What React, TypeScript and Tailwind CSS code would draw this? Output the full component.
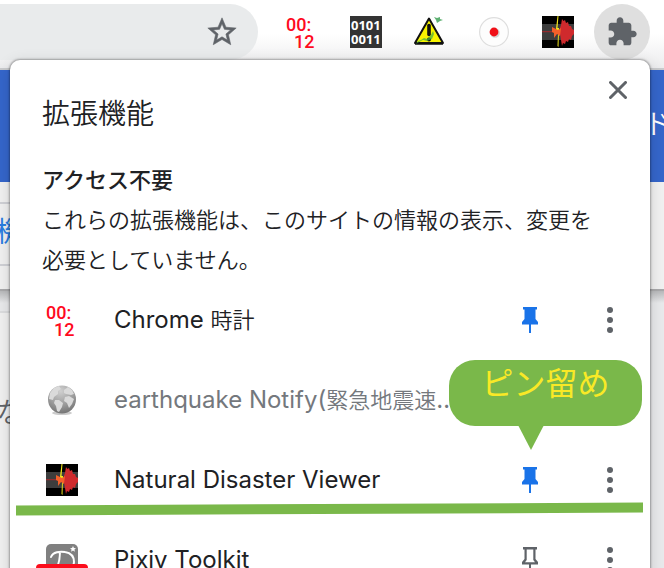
import React from "react";

function ClockIcon() {
  return (
    <svg viewBox="0 0 32 32" className="size-8 shrink-0 overflow-visible" aria-hidden="true">
      <g fill="#ff0a1e" fontFamily="Roboto, sans-serif" fontSize="18" fontWeight="500">
        <text x="0" y="15">00:</text>
        <text x="8" y="32">12</text>
      </g>
    </svg>
  );
}

function BinaryIcon() {
  return (
    <svg viewBox="0 0 32 32" className="size-8 shrink-0" aria-hidden="true">
      <rect width="32" height="32" fill="#333" />
      <g fill="#fff" fontFamily="'Open Sans', sans-serif" fontSize="13" fontWeight="700">
        <text x="1" y="14">0101</text>
        <text x="1" y="28">0011</text>
      </g>
    </svg>
  );
}

function WarningIcon() {
  return (
    <svg viewBox="2 0 32 32" className="size-8 shrink-0" aria-hidden="true">
      <path d="M17 2.500 31 27H3Z" fill="#f8f400" stroke="#111" strokeWidth="2" strokeLinejoin="round" />
      <path d="M3 28h28" stroke="#111" strokeWidth="1.5" />
      <path d="M17 9.500v9" stroke="#111" strokeWidth="3.6" strokeLinecap="round" />
      <circle cx="17" cy="23.4" r="2" fill="#111" />
      <path d="M4 28l2-3 3-1 3-2 3 1 4-4 2-4 1 3-2 5-5 2-4-1-4 2Z" fill="#4fb33c" opacity=".75" />
      <path d="m22 1 3 1 3-1 0 2 3 1-3 1-3 2-1-3Z" fill="#43a35a" opacity=".85" />
    </svg>
  );
}

function RecordIcon() {
  return (
    <svg viewBox="2 0 32 32" className="size-8 shrink-0" aria-hidden="true">
      <circle cx="18" cy="16" r="14.4" fill="#fdfdfd" stroke="#dedede" strokeWidth="1.2" />
      <circle cx="19" cy="17" r="4.8" fill="#bbb" opacity=".6" />
      <circle cx="18" cy="16" r="4.4" fill="#f01018" />
    </svg>
  );
}

function DisasterIcon() {
  return (
    <svg viewBox="0 0 32 32" className="size-8 shrink-0" aria-hidden="true">
      <rect width="32" height="32" fill="#000" />
      <rect y="8" width="32" height="16" fill="#3d3d3d" />
      <path d="M0 15.700h12" stroke="#a8292c" strokeWidth="1" />
      <path
        d="m20 3 1.500 2L23 4l1 3 2-1 1 4 2 0 1 3 2 1v4l-2 2-1 4-2-1-1 3-2-1-1 3-2-1-1 3-1-6-1-6v-6l1-3Z"
        fill="#cf2a2d"
      />
      <path d="M15.500 0h1L15.500 12h1.500l-.5 19-1-1L16 18l-3-3 1-2Z" fill="#f4e91b" />
      <path d="m10 11 6 3 3-2-1 8-3-2-3 4 0-5-2-1Z" fill="#f4602a" />
    </svg>
  );
}

function GlobeIcon() {
  return (
    <svg viewBox="0 0 32 32" className="size-8 shrink-0" aria-hidden="true">
      <defs>
        <radialGradient id="globe" cx=".45" cy=".2" r=".8">
          <stop offset="0" stopColor="#d0d0d0" />
          <stop offset=".6" stopColor="#9d9d9d" />
          <stop offset="1" stopColor="#757575" />
        </radialGradient>
      </defs>
      <ellipse cx="16" cy="29" rx="10" ry="2" fill="#ccc" />
      <circle cx="16" cy="15.5" r="14" fill="url(#globe)" />
      <g fill="#dadada">
        <path d="M4 9 8 4l5-2 2 3-3 2 0 3-4 3-1 3-4-1Z" />
        <path d="m9 16 4 0 4 3-1 4-3 5-2-1-1-5-2-3Z" />
        <path d="m18 6 4-3 4 3 2 4-3 1-5-1-2-1Z" />
        <path d="m19 13 4-1 5 3-2 5-3 4-2-5-3-2Z" />
      </g>
    </svg>
  );
}

function PixivIcon() {
  return (
    <svg viewBox="0 0 52 32" className="-mx-[10px] h-8 w-[52px] shrink-0" aria-hidden="true">
      <rect x="10" width="32" height="32" rx="5" fill="#808080" />
      <path
        d="M15 13c2-5 9-6 14-5 6 1 9 5 9 10s-4 9-10 9M24 8c0 6-1 12-4 18"
        fill="none"
        stroke="#fff"
        strokeWidth="2"
        strokeLinecap="round"
      />
      <path d="m37 2 .9 2 2.100.2-1.600 1.400.5 2.100-1.900-1.100-1.900 1.100.5-2.100L34 4.200l2.100-.2Z" fill="#fff" />
      <rect y="20" width="52" height="20" rx="4" fill="#fc0d1b" />
    </svg>
  );
}

function StarIcon() {
  return (
    <svg viewBox="0 0 24 24" className="size-[34px]" fill="#5f6368" stroke="#5f6368" strokeWidth=".4" aria-hidden="true">
      <path d="m22 9.240-7.190-.62L12 2 9.190 8.630 2 9.240l5.460 4.730L5.820 21 12 17.270 18.180 21l-1.630-7.030L22 9.240zM12 15.400l-3.760 2.270 1-4.280-3.320-2.880 4.380-.38L12 6.100l1.710 4.040 4.380.38-3.320 2.880 1 4.280L12 15.400z" />
    </svg>
  );
}

function PuzzleIcon() {
  return (
    <svg viewBox="0 0 24 24" className="size-8" fill="#5f6368" aria-hidden="true">
      <path d="M20.500 11H19V7c0-1.100-.9-2-2-2h-4V3.500C13 2.120 11.880 1 10.500 1S8 2.120 8 3.500V5H4c-1.100 0-1.990.9-1.990 2v3.800H3.500c1.490 0 2.700 1.210 2.700 2.700s-1.210 2.700-2.700 2.700H2V20c0 1.100.9 2 2 2h3.800v-1.500c0-1.490 1.210-2.700 2.700-2.700 1.490 0 2.700 1.210 2.700 2.700V22H17c1.100 0 2-.9 2-2v-4h1.500c1.380 0 2.500-1.120 2.500-2.500S21.880 11 20.500 11z" />
    </svg>
  );
}

function PinIcon({ pinned }: { pinned: boolean }) {
  return pinned ? (
    <svg viewBox="0 0 16 26" className="h-[26px] w-4" fill="#1a73e8" aria-hidden="true">
      <path d="M1 0h14v2.500h-1.500V12l2.500 3v2.500H9V26H7v-8.500H0V15l2.500-3V2.500H1Z" />
    </svg>
  ) : (
    <svg viewBox="0 0 16 26" className="h-[26px] w-4" fill="#5f6368" aria-hidden="true">
      <path
        fillRule="evenodd"
        d="M1 0h14v2.500h-1.500V12l2.500 3v2.500H9V26H7v-8.500H0V15l2.500-3V2.500H1ZM4.700 2.500V13L3 15.300h10L11.300 13V2.500Z"
      />
    </svg>
  );
}

function DotsIcon() {
  return (
    <svg viewBox="0 0 6 26" className="h-[26px] w-[6px]" fill="#5f6368" aria-hidden="true">
      <circle cx="3" cy="3" r="3" />
      <circle cx="3" cy="13" r="3" />
      <circle cx="3" cy="23" r="3" />
    </svg>
  );
}

type Extension = {
  name: string;
  nameJa?: string;
  icon: React.ReactNode;
  pinned: boolean;
  disabled?: boolean;
  highlighted?: boolean;
};

const extensions: Extension[] = [
  { name: "Chrome ", nameJa: "時計", icon: <ClockIcon />, pinned: true },
  { name: "earthquake Notify(", nameJa: "緊急地震速報)", icon: <GlobeIcon />, pinned: false, disabled: true },
  { name: "Natural Disaster Viewer", icon: <DisasterIcon />, pinned: true, highlighted: true },
  { name: "Pixiv Toolkit", icon: <PixivIcon />, pinned: false },
];

function Callout() {
  return (
    <div className="absolute right-2 bottom-[94px] z-10">
      <div className="h-[66px] w-[193px] rounded-[26px] bg-[#7ab84a] text-center text-[32px] leading-[48px] text-[#f9e926]">
        ピン留め
      </div>
      <svg viewBox="0 0 26 25" className="absolute top-[65px] left-[69px] h-[25px] w-[26px]" aria-hidden="true">
        <path d="M0 0h26L13 25Z" fill="#7ab84a" />
      </svg>
    </div>
  );
}

function ExtensionRow({ name, nameJa, icon, pinned, disabled, highlighted }: Extension) {
  return (
    <li className="relative flex h-20 items-center pr-5 pl-9">
      {icon}
      <span className={`mr-12 ml-9 min-w-0 flex-1 truncate text-2xl leading-10 ${disabled ? "text-[#74787d]" : ""}`}>
        {name}
        {nameJa && <span className="text-[22px] font-[350]">{nameJa}</span>}
      </span>
      <button
        type="button"
        aria-label={`${name} pin`}
        aria-pressed={pinned}
        className={`flex size-10 items-center justify-center ${disabled ? "invisible" : ""}`}
      >
        <PinIcon pinned={pinned} />
      </button>
      <button
        type="button"
        aria-label={`${name} menu`}
        className={`ml-10 flex size-10 items-center justify-center ${disabled ? "invisible" : ""}`}
      >
        <DotsIcon />
      </button>
      {highlighted && (
        <>
          <Callout />
          <div className="absolute right-[7px] bottom-[6px] left-[6px] h-[10px] rotate-[-0.27deg] bg-[#7ab84a]" />
        </>
      )}
    </li>
  );
}

export default function App() {
  return (
    <div className="relative flex h-screen flex-col overflow-hidden bg-[#e9eaec] font-['Inter','Noto_Sans_CJK_JP',sans-serif] text-[#202124]">
      <header className="flex h-[70px] shrink-0 items-start border-b-2 border-[#c9cacd] bg-linear-to-b from-white from-50% to-[#ececee] pt-1 pr-[14px]">
        <div className="flex h-14 flex-1 items-center justify-end rounded-r-full bg-[#e9ebec] pr-[19px]">
          <button type="button" aria-label="Bookmark">
            <StarIcon />
          </button>
        </div>
        <div className="mr-5 ml-7 flex h-14 items-center gap-8">
          <ClockIcon />
          <BinaryIcon />
          <WarningIcon />
          <RecordIcon />
          <DisasterIcon />
        </div>
        <button
          type="button"
          aria-label="Extensions"
          className="flex size-14 items-center justify-center rounded-full bg-[#dfdfdf]"
        >
          <PuzzleIcon />
        </button>
      </header>

      <div className="flex h-28 shrink-0 items-center justify-end bg-[#3566cb] pb-1 text-[28px] font-[350] text-white">
        <span className="-mr-2">ド</span>
      </div>
      <div className="h-[109px] shrink-0 border-b-2 border-[#a9a9ab] bg-[#f1f1f1] pt-5">
        <div className="flex h-16 w-1/2 items-center border-y-2 border-[#d0d1d6] pb-1 text-[28px] leading-8 text-[#2a7de1]">
          <span className="-ml-1">機能</span>
        </div>
      </div>
      <div className="h-3 shrink-0 bg-linear-to-b from-[#b8b9bb] to-[#e9eaec]" />
      <div className="mt-2 w-1/2 flex-1 border-t-2 border-[#dcdddf] bg-[#f1f1f1] pt-21 text-[28px] leading-8 text-[#5f6368]">
        <span className="-ml-1 font-[350]">な</span>
      </div>

      <section className="absolute top-[60px] right-[14px] left-[10px] rounded-t-[10px] bg-white shadow-[0_0_2px_1px_rgba(0,0,0,0.3),0_4px_16px_rgba(0,0,0,0.16)]">
        <div className="flex h-[100px] items-start justify-between pr-3 pl-8">
          <h1 className="pt-8 text-[28px] leading-[44px] font-[350]">拡張機能</h1>
          <button type="button" aria-label="Close" className="mt-[10px] flex size-10 items-center justify-center">
            <svg viewBox="0 0 18 18" className="size-[18px]" aria-hidden="true">
              <path d="m1.500 1.500 15 15m0-15-15 15" stroke="#5f6368" strokeWidth="3" strokeLinecap="round" />
            </svg>
          </button>
        </div>
        <div className="pr-12 pl-8 text-[22px] leading-10">
          <h2 className="font-medium">アクセス不要</h2>
          <p className="font-[350]">これらの拡張機能は、このサイトの情報の表示、変更を必要としていません。</p>
        </div>
        <ul>
          {extensions.map((extension) => (
            <ExtensionRow key={extension.name} {...extension} />
          ))}
        </ul>
      </section>
    </div>
  );
}
